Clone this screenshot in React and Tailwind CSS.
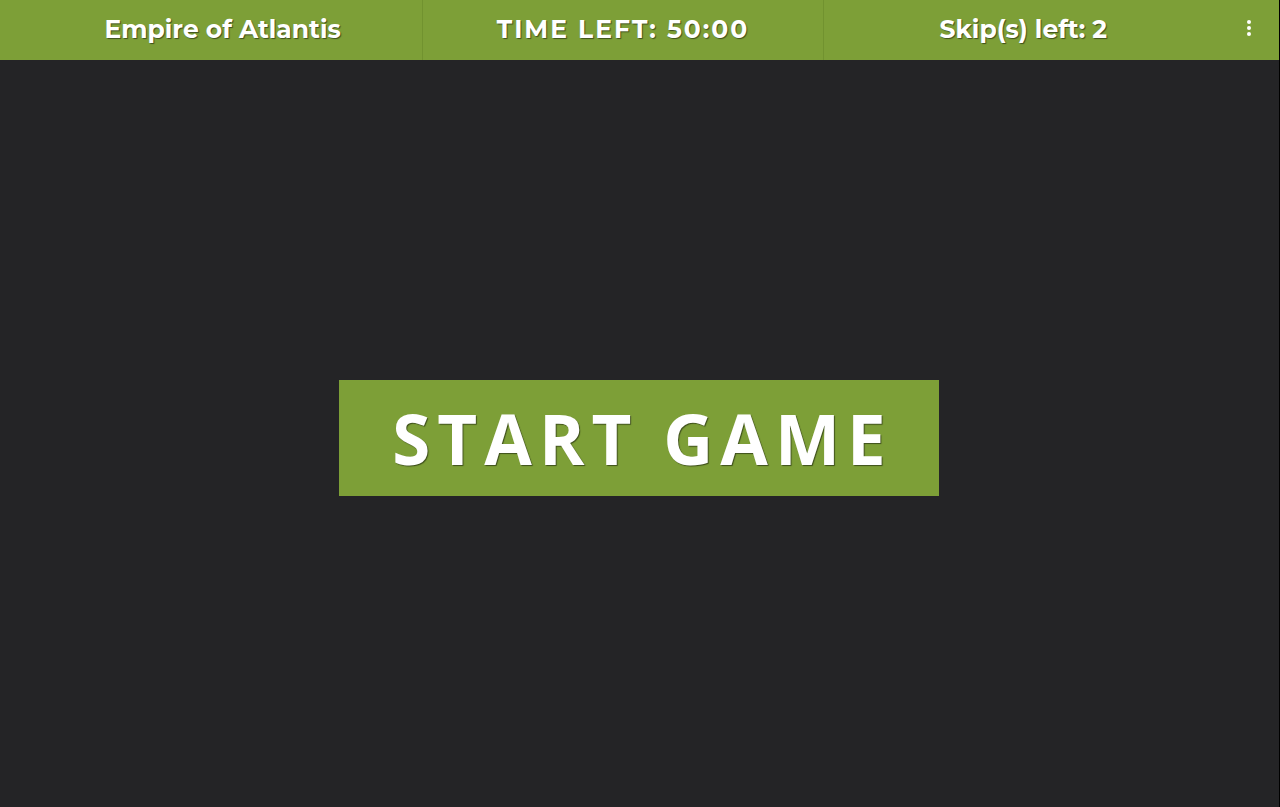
import React from 'react';

function StatusCell({ children, className = '' }) {
  return (
    <div
      className={`flex h-full min-w-0 flex-1 items-center justify-center pb-0.5 whitespace-nowrap ${className}`}
    >
      {children}
    </div>
  );
}

function MenuButton() {
  return (
    <button
      type="button"
      aria-label="Menu"
      className="flex h-14 w-14 shrink-0 cursor-pointer items-center justify-center self-start pr-1 text-white"
    >
      <svg width="24" height="24" viewBox="0 0 24 24" fill="currentColor" aria-hidden="true">
        <circle cx="12" cy="6" r="2" />
        <circle cx="12" cy="12" r="2" />
        <circle cx="12" cy="18" r="2" />
      </svg>
    </button>
  );
}

export default function App() {
  return (
    <div className="flex min-h-screen flex-col border-r border-black bg-[#242426] text-white">
      <header className="flex h-15 w-full items-center bg-[#7d9f37] pl-[23px] font-['Montserrat','Inter',sans-serif] text-[25px] leading-8 font-bold [text-shadow:1px_1px_1px_rgba(0,0,0,0.5)]">
        <StatusCell className="border-r border-[#71922f]">
          <h1>Empire of Atlantis</h1>
        </StatusCell>
        <StatusCell className="border-r border-[#71922f] tracking-[2px]">
          <p>TIME LEFT: 50:00</p>
        </StatusCell>
        <StatusCell>
          <p>Skip(s) left: 2</p>
        </StatusCell>
        <MenuButton />
      </header>
      <main className="flex flex-1 items-center justify-center pt-2 pr-px">
        <button
          type="button"
          className="flex h-29 w-150 max-w-full cursor-pointer items-center justify-center bg-[#7d9f37] pt-0.5 pl-[7px] font-['Open_Sans',sans-serif] text-[69px] leading-none font-bold tracking-[7px] whitespace-nowrap [text-shadow:1px_1px_1px_rgba(0,0,0,0.5)]"
        >
          START GAME
        </button>
      </main>
    </div>
  );
}
